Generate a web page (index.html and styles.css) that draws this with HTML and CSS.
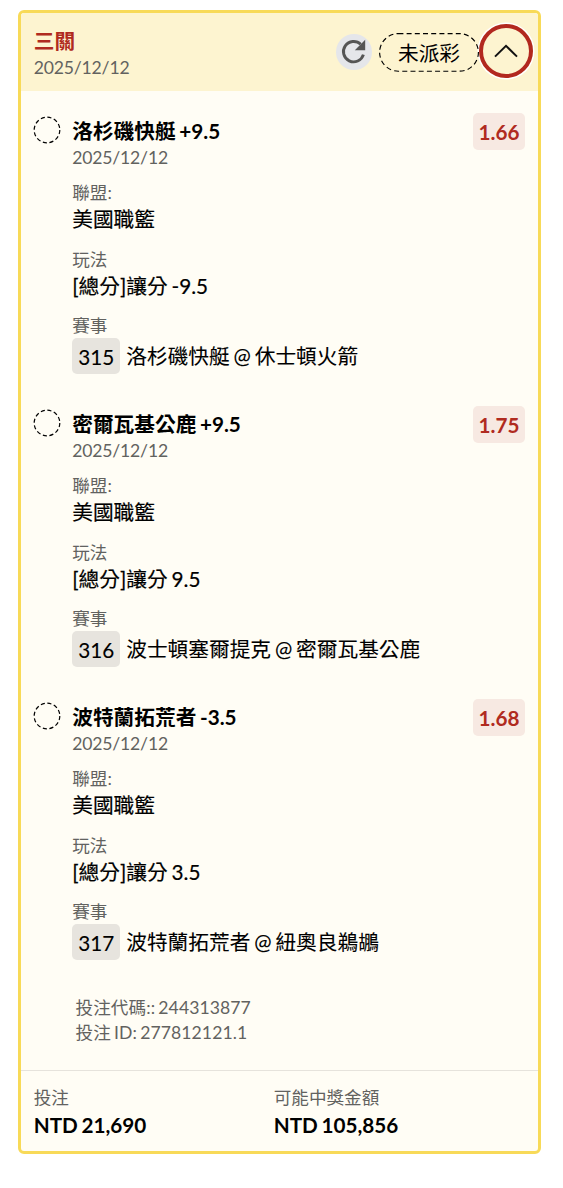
FILE: index.html
```html
<!DOCTYPE html>
<html lang="zh-Hant">
<head>
<meta charset="utf-8">
<title>三關</title>
<link rel="stylesheet" href="styles.css">
</head>
<body>
<article class="ticket">
  <header class="head">
    <div class="head-info">
      <div class="head-title">三關</div>
      <div class="date">2025/12/12</div>
    </div>
    <div class="actions">
      <span class="refresh"><svg class="refresh-icon" viewBox="0 0 36 36"><path d="M27.4 20.6A10.2 10.2 0 1 1 24.7 10.3" fill="none" stroke="#555" stroke-width="2.9"/><path d="M29.2 5.8V16.2H18.8Z" fill="#555"/></svg></span>
      <span class="status"><svg class="outline" viewBox="0 0 100 39"><rect x="0.6" y="0.6" width="98.8" height="37.6" rx="18.8" fill="none" stroke="#000" stroke-width="1.15" stroke-dasharray="5 3.2"/></svg>未派彩</span>
      <span class="toggle"><svg class="chevron" viewBox="0 0 24 14"><path d="M1 12.6 12 1.8 23 12.6" fill="none" stroke="#111" stroke-width="2"/></svg></span>
    </div>
  </header>
  <section class="legs">
    <div class="leg">
      <svg class="ring" viewBox="0 0 28 28"><circle cx="14" cy="14" r="12.8" fill="none" stroke="#000" stroke-width="1.2" stroke-dasharray="4.1 2.6"/></svg>
      <div class="detail">
        <div class="pick">洛杉磯快艇 +9.5</div>
        <div class="date">2025/12/12</div>
        <div class="field"><div class="label">聯盟:</div><div class="value">美國職籃</div></div>
        <div class="field"><div class="label">玩法</div><div class="value">[總分]讓分 -9.5</div></div>
        <div class="field"><div class="label">賽事</div><div class="match"><span class="number">315</span><span>洛杉磯快艇 @ 休士頓火箭</span></div></div>
      </div>
      <span class="odds">1.66</span>
    </div>
    <div class="leg">
      <svg class="ring" viewBox="0 0 28 28"><circle cx="14" cy="14" r="12.8" fill="none" stroke="#000" stroke-width="1.2" stroke-dasharray="4.1 2.6"/></svg>
      <div class="detail">
        <div class="pick">密爾瓦基公鹿 +9.5</div>
        <div class="date">2025/12/12</div>
        <div class="field"><div class="label">聯盟:</div><div class="value">美國職籃</div></div>
        <div class="field"><div class="label">玩法</div><div class="value">[總分]讓分 9.5</div></div>
        <div class="field"><div class="label">賽事</div><div class="match"><span class="number">316</span><span>波士頓塞爾提克 @ 密爾瓦基公鹿</span></div></div>
      </div>
      <span class="odds">1.75</span>
    </div>
    <div class="leg">
      <svg class="ring" viewBox="0 0 28 28"><circle cx="14" cy="14" r="12.8" fill="none" stroke="#000" stroke-width="1.2" stroke-dasharray="4.1 2.6"/></svg>
      <div class="detail">
        <div class="pick">波特蘭拓荒者 -3.5</div>
        <div class="date">2025/12/12</div>
        <div class="field"><div class="label">聯盟:</div><div class="value">美國職籃</div></div>
        <div class="field"><div class="label">玩法</div><div class="value">[總分]讓分 3.5</div></div>
        <div class="field"><div class="label">賽事</div><div class="match"><span class="number">317</span><span>波特蘭拓荒者 @ 紐奧良鵜鶘</span></div></div>
      </div>
      <span class="odds">1.68</span>
    </div>
    <div class="codes">
      <div>投注代碼:: 244313877</div>
      <div>投注 ID: 277812121.1</div>
    </div>
  </section>
  <footer class="totals">
    <div><div class="label">投注</div><div class="amount">NTD 21,690</div></div>
    <div><div class="label">可能中獎金額</div><div class="amount">NTD 105,856</div></div>
  </footer>
</article>
</body>
</html>
```
FILE: styles.css
```css
* { box-sizing: border-box; }
body {
  margin: 0;
  padding: 10px 22px 0 18px;
  background: #fff;
  color: #000;
  font: 20.7px/26px Lato, "Noto Sans CJK TC", sans-serif;
  word-spacing: -1.4px;
}
svg { display: block; }
.ticket {
  height: 1144px;
  display: flex;
  flex-direction: column;
  border: 3px solid #f8da58;
  border-radius: 6px;
  background: #fffdf5;
}
.head {
  height: 78px;
  flex: none;
  display: flex;
  justify-content: space-between;
  padding: 10px 5px 0 12.7px;
  background: #fdf4d0;
  border-radius: 3px 3px 0 0;
}
.head-title { height: 32px; line-height: 37px; color: #b02b20; font-weight: 700; }
.head-title + .date { line-height: 25px; }
.date, .label, .codes { color: #62625f; font-size: 17.6px; }
.date { letter-spacing: -0.18px; }
.actions { display: flex; align-items: flex-start; }
.refresh { width: 36px; height: 36px; margin: 10.5px 7px 0 0; border-radius: 50%; background: #e5e6ea; }
.status {
  position: relative;
  width: 100px;
  height: 39px;
  margin-top: 10px;
  text-align: center;
  line-height: 40px;
}
.outline { position: absolute; inset: 0; width: 100px; height: 39px; }
.toggle {
  width: 54px;
  height: 54px;
  margin-top: 1px;
  flex: none;
  display: flex;
  align-items: center;
  justify-content: center;
  border: 4px solid #b2281f;
  border-radius: 50%;
  box-shadow: 0 0 0 1.5px #fff;
}
.chevron { width: 24px; height: 14px; }
.legs { flex: none; padding: 27px 13px 0; }
.leg { height: 293px; display: flex; align-items: flex-start; }
.ring { width: 28px; height: 28px; flex: none; margin: -2px 11px 0 -1px; }
.detail { flex: 1; padding-left: 0.2px; }
.pick { font-weight: 700; }
.pick + .date { line-height: 27px; height: 26px; }
.field { margin-top: 14px; }
.date + .field { margin-top: 9px; }
.detail .label { line-height: 28px; height: 26px; }
.value { height: 27px; line-height: 28px; -webkit-text-stroke: 0.2px #000; }
.field:last-child { margin-top: 13px; }
.match { display: flex; align-items: center; gap: 6px; -webkit-text-stroke: 0.1px #000; }
.number { width: 48px; height: 36px; border-radius: 5px; background: #e7e4de; text-align: center; line-height: 38px; }
.odds {
  width: 52px;
  height: 37px;
  margin: -5px 0 0 0;
  border-radius: 5px;
  background: #f7e9e2;
  color: #b02b20;
  font-weight: 700;
  line-height: 38px;
  text-align: center;
}
.codes { margin-top: -2px; padding-left: 41.5px; line-height: 25px; letter-spacing: 0.08px; }
.totals {
  flex: 1;
  display: grid;
  grid-template-columns: 240px 1fr;
  align-content: start;
  padding: 14px 12.7px 0;
  margin-top: 25px;
  border-top: 1.5px solid #e6e3dc;
}
.amount { height: 28px; line-height: 28px; font-weight: 700; }
```
